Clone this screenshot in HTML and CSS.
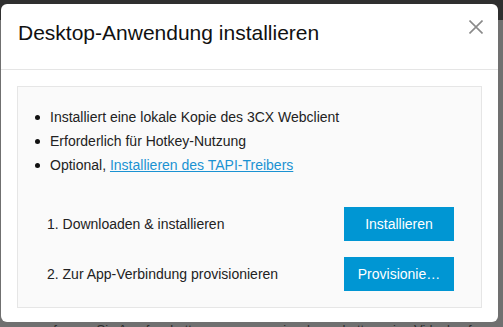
FILE: index.html
```html
<!DOCTYPE html>
<html lang="de">
<head>
<meta charset="utf-8">
<title>Desktop-Anwendung installieren</title>
<link rel="stylesheet" href="styles.css">
</head>
<body>
<div class="page">
  <div class="topbar"></div>
  <div class="page-main">
    <span class="bg-text bg-left">g empfangen Sie Anrufe, chatten</span>
    <span class="bg-text bg-right">einsehen, chatten, eine Videokonf</span>
  </div>
</div>
<div class="modal">
  <div class="dialog">
    <div class="dialog-header">
      <h1 class="dialog-title">Desktop-Anwendung installieren</h1>
      <button class="close" aria-label="Schließen">
        <svg width="14" height="14" viewBox="0 0 14 14"><path d="M0.5 0.5 L13.5 13.5 M13.5 0.5 L0.5 13.5" stroke="#8a8a8a" stroke-width="1.6" fill="none"/></svg>
      </button>
    </div>
    <div class="dialog-body">
      <div class="panel">
        <ul class="features">
          <li>Installiert eine lokale Kopie des 3CX Webclient</li>
          <li>Erforderlich für Hotkey-Nutzung</li>
          <li>Optional, <a href="#" class="link">Installieren des TAPI-Treibers</a></li>
        </ul>
        <div class="steps">
          <div class="step">
            <span class="step-label">1. Downloaden &amp; installieren</span>
            <button class="btn"><span class="btn-text">Installieren</span></button>
          </div>
          <div class="step">
            <span class="step-label">2. Zur App-Verbindung provisionieren</span>
            <button class="btn" title="Provisionieren"><span class="btn-text">Provisionie…</span></button>
          </div>
        </div>
      </div>
    </div>
  </div>
</div>
</body>
</html>
```
FILE: styles.css
```css
* { box-sizing: border-box; }
html, body { margin: 0; padding: 0; }
body {
  width: 503px;
  height: 327px;
  overflow: hidden;
  background: #707070;
  font-family: "Liberation Sans", Arial, sans-serif;
  position: relative;
}
.page { display: flex; flex-direction: column; }
.topbar { height: 20px; background: #2f2f2f; }
.page-main {
  display: flex;
  padding-top: 302px;
  font-size: 13px;
  line-height: 15px;
  color: #2c2c2c;
  white-space: nowrap;
  overflow: hidden;
}
.bg-left { padding-left: 17px; width: 276px; flex: none; }
.bg-right { flex: none; }

.modal {
  position: absolute;
  inset: 0;
  padding: 4px 5px 5px 1px;
}
.dialog {
  position: relative;
  width: 497px;
  height: 318px;
  background: #fff;
  border-radius: 6px;
  display: flex;
  flex-direction: column;
}
.dialog-header {
  padding: 17px 17px 24px;
  border-bottom: 1px solid #e5e5e5;
}
.dialog-title {
  margin: 0;
  font-size: 21px;
  line-height: 24px;
  font-weight: normal;
  color: #111;
}
.close {
  position: absolute;
  top: 16px;
  right: 15px;
  width: 14px;
  height: 14px;
  padding: 0;
  border: 0;
  background: none;
  display: flex;
}
.dialog-body { padding: 16px 16px 14px; }
.panel {
  border: 1px solid #e6e6e6;
  background: #fafafa;
  padding: 18px 27px 16px 15px;
  color: #222;
  font-size: 14px;
}
.features {
  list-style: none;
  margin: 0;
  padding: 0;
}
.features li {
  display: flex;
  align-items: center;
  line-height: 24px;
  white-space: pre;
}
.features li::before {
  content: "";
  width: 5px;
  height: 5px;
  border-radius: 50%;
  background: #111;
  margin: 0 10px 0 2px;
  flex: none;
}
.link { color: #1a92d2; text-decoration: underline; }
.steps {
  display: flex;
  flex-direction: column;
  gap: 16px;
  margin-top: 30px;
}
.step {
  display: flex;
  align-items: center;
  justify-content: space-between;
  padding-left: 14px;
}
.btn {
  width: 110px;
  height: 34px;
  border: 0;
  border-radius: 0;
  background: #0096d3;
  color: #fff;
  font-family: inherit;
  font-size: 14px;
  padding: 0 12px;
  text-align: center;
}
.btn-text {
  display: block;
  white-space: nowrap;
}
```
